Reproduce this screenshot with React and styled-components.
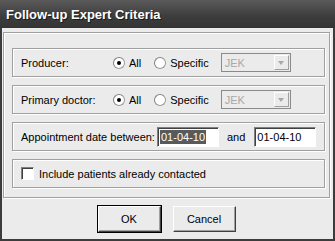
import React from "react";
import styled, { createGlobalStyle } from "styled-components";

const GlobalStyle = createGlobalStyle`
  html, body {
    margin: 0;
    padding: 0;
    background: #ebebeb;
  }
  body {
    font-family: "Liberation Sans", Arial, sans-serif;
    font-size: 11px;
    color: #000;
  }
`;

const Window = styled.div`
  width: 335px;
  height: 241px;
  box-sizing: border-box;
  background: #ebebeb;
  border: 2px solid #3c3c3c;
  border-top: none;
  display: flex;
  flex-direction: column;
`;

const TitleBar = styled.div`
  height: 28px;
  margin: 0 -2px;
  padding-left: 6px;
  display: flex;
  align-items: center;
  background: linear-gradient(#5a5a5a, #3c3c3c 60%, #343434);
  color: #fff;
  font-family: "Liberation Sans", Arial, sans-serif;
  font-weight: bold;
  font-size: 13px;
  text-shadow: 1px 1px 0 #1a1a1a;
`;

const GroupBox = styled.div`
  margin: 4px 3px 0 1px;
  padding: 15px 4px 9px 8px;
  border: 1px solid #a0a0a0;
  box-shadow: inset 1px 1px 0 #fff, 1px 1px 0 #fff;
  display: flex;
  flex-direction: column;
  gap: 8px;
`;

const Section = styled.div`
  height: 29px;
  box-sizing: border-box;
  padding-left: 8px;
  border: 1px solid #a0a0a0;
  box-shadow: inset 1px 1px 0 #fff, 1px 1px 0 #fff;
  display: flex;
  align-items: center;
`;

const Label = styled.span`
  width: ${(p) => p.$w || "auto"};
  flex-shrink: 0;
  white-space: nowrap;
`;

const RadioOption = styled.label`
  display: flex;
  align-items: center;
  gap: 4px;
  margin-right: ${(p) => p.$mr || "0"};
`;

const RadioCircle = styled.span`
  width: 12px;
  height: 12px;
  box-sizing: border-box;
  border-radius: 50%;
  background: #fff;
  border: 1px solid #9a9a9a;
  border-top-color: #808080;
  border-left-color: #808080;
  position: relative;
  &::after {
    content: "";
    display: ${(p) => (p.$checked ? "block" : "none")};
    position: absolute;
    left: 3px;
    top: 3px;
    width: 4px;
    height: 4px;
    border-radius: 50%;
    background: #000;
  }
`;

const Combo = styled.div`
  margin-left: 12px;
  width: 70px;
  height: 19px;
  box-sizing: border-box;
  border: 1px solid #8a8a8a;
  background: #ebebeb;
  display: flex;
  align-items: center;
  justify-content: space-between;
  color: #a8a8a8;
  padding-left: 3px;
`;

const ComboButton = styled.span`
  width: 15px;
  height: 15px;
  margin-right: 1px;
  box-sizing: border-box;
  border: 1px solid #fff;
  border-right-color: #a0a0a0;
  border-bottom-color: #a0a0a0;
  background: #ebebeb;
  display: flex;
  align-items: center;
  justify-content: center;
`;

const Arrow = styled.span`
  width: 0;
  height: 0;
  border-left: 3.5px solid transparent;
  border-right: 3.5px solid transparent;
  border-top: 4px solid #a8a8a8;
`;

const DateInput = styled.div`
  width: ${(p) => p.$w};
  height: 20px;
  box-sizing: border-box;
  background: #fff;
  border: 1px solid #fff;
  border-top-color: #808080;
  border-left-color: #808080;
  box-shadow: inset 1px 1px 0 #404040;
  display: flex;
  align-items: center;
  padding-left: 2px;
`;

const Selected = styled.span`
  background: #5a5a5a;
  color: #fff;
  padding: 0 1px;
  line-height: 14px;
`;

const And = styled.span`
  margin: 0 9px 0 8px;
`;

const Checkbox = styled.span`
  width: 13px;
  height: 13px;
  box-sizing: border-box;
  background: #fff;
  border: 1px solid #fff;
  border-top-color: #808080;
  border-left-color: #808080;
  box-shadow: inset 1px 1px 0 #404040;
  margin-right: 5px;
`;

const ButtonRow = styled.div`
  display: flex;
  justify-content: center;
  gap: 12px;
  margin-top: 8px;
  padding-right: 2px;
`;

const Button = styled.button`
  width: 63px;
  height: 26px;
  box-sizing: border-box;
  font-family: "Liberation Sans", Arial, sans-serif;
  font-size: 11px;
  color: #000;
  background: #ebebeb;
  border: 1px solid;
  border-color: #fff #404040 #404040 #fff;
  box-shadow: inset -1px -1px 0 #a0a0a0;
  padding: 0;
  outline: ${(p) => (p.$default ? "1px solid #000" : "none")};
`;

export default function App() {
  return (
    <>
      <GlobalStyle />
      <Window>
        <TitleBar>Follow-up Expert Criteria</TitleBar>
        <GroupBox>
          {["Producer:", "Primary doctor:"].map((label) => (
            <Section key={label}>
              <Label $w="92px">{label}</Label>
              <RadioOption $mr="13px">
                <RadioCircle $checked />
                All
              </RadioOption>
              <RadioOption>
                <RadioCircle />
                Specific
              </RadioOption>
              <Combo>
                JEK
                <ComboButton>
                  <Arrow />
                </ComboButton>
              </Combo>
            </Section>
          ))}
          <Section>
            <Label $w="136px">Appointment date between:</Label>
            <DateInput $w="62px">
              <Selected>01-04-10</Selected>
            </DateInput>
            <And>and</And>
            <DateInput $w="62px">01-04-10</DateInput>
          </Section>
          <Section>
            <Checkbox />
            <Label>Include patients already contacted</Label>
          </Section>
        </GroupBox>
        <ButtonRow>
          <Button $default>OK</Button>
          <Button>Cancel</Button>
        </ButtonRow>
      </Window>
    </>
  );
}
